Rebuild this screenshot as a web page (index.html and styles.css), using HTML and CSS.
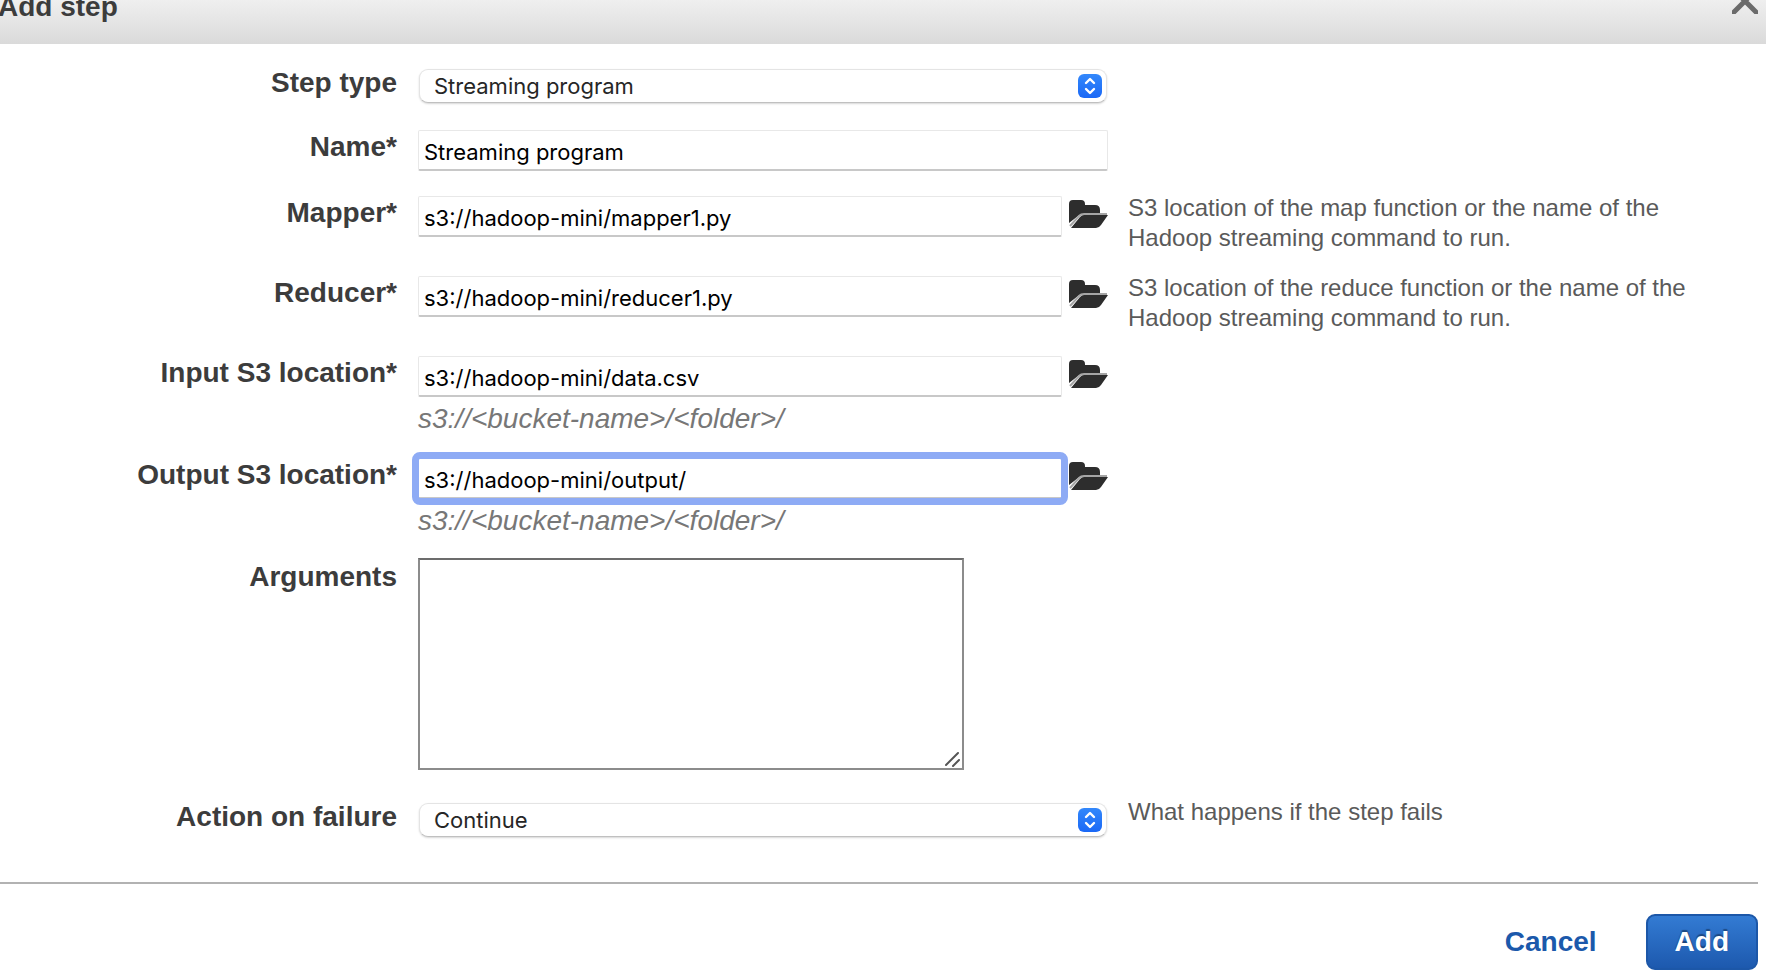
FILE: index.html
```
<!DOCTYPE html>
<html lang="en">
<head>
<meta charset="utf-8">
<title>Add step</title>
<link rel="stylesheet" href="styles.css">
</head>
<body>
<svg class="sprites" aria-hidden="true">
  <symbol id="folder" viewBox="0 0 39 29">
    <path fill="#2d2d2d" d="M0 24V5Q0 1 4 1h8q4 0 4 4v1h10q5 0 5 5v4H14q-3 0-5 2z"/>
    <path fill="none" stroke="#a5a5a5" stroke-width="2" d="M1 27l9-10q2-2 5-2h23"/>
    <path fill="#2d2d2d" d="M2 29l9-11q2-2 4-2h24l-7 10q-2 3-5 3z"/>
  </symbol>
  <symbol id="updown" viewBox="0 0 24 24">
    <path fill="none" stroke="#fff" stroke-width="2.4" stroke-linecap="round" stroke-linejoin="round" d="M8 9l4-4 4 4M8 15l4 4 4-4"/>
  </symbol>
</svg>
<div class="dialog">
  <header class="dialog-header">
    <h1 class="dialog-title">Add step</h1>
    <button class="close" type="button" aria-label="Close">
      <svg viewBox="0 0 26 26" width="26" height="26"><path fill="none" stroke="#6b6b6b" stroke-width="5" d="M-1-1L27 27M27-1L-1 27"/></svg>
    </button>
  </header>
  <form class="form">
    <div class="row row-select">
      <label class="label" for="type">Step type</label>
      <div class="control">
        <div class="select-wrap">
          <select class="select" id="type"><option>Streaming program</option></select>
          <svg class="badge"><use href="#updown"/></svg>
        </div>
      </div>
    </div>
    <div class="row row-name">
      <label class="label" for="name">Name*</label>
      <div class="control"><input class="input" id="name" type="text" value="Streaming program"></div>
    </div>
    <div class="row">
      <label class="label" for="mapper">Mapper*</label>
      <div class="control">
        <div class="path">
          <input class="input" id="mapper" type="text" value="s3://hadoop-mini/mapper1.py">
          <button class="browse" type="button" aria-label="Browse for mapper"><svg class="folder"><use href="#folder"/></svg></button>
        </div>
      </div>
      <p class="help">S3 location of the map function or the name of the Hadoop streaming command to run.</p>
    </div>
    <div class="row">
      <label class="label" for="reducer">Reducer*</label>
      <div class="control">
        <div class="path">
          <input class="input" id="reducer" type="text" value="s3://hadoop-mini/reducer1.py">
          <button class="browse" type="button" aria-label="Browse for reducer"><svg class="folder"><use href="#folder"/></svg></button>
        </div>
      </div>
      <p class="help">S3 location of the reduce function or the name of the Hadoop streaming command to run.</p>
    </div>
    <div class="row">
      <label class="label" for="input">Input S3 location*</label>
      <div class="control">
        <div class="path">
          <input class="input" id="input" type="text" value="s3://hadoop-mini/data.csv">
          <button class="browse" type="button" aria-label="Browse for input"><svg class="folder"><use href="#folder"/></svg></button>
        </div>
        <p class="hint">s3://&lt;bucket-name&gt;/&lt;folder&gt;/</p>
      </div>
    </div>
    <div class="row">
      <label class="label" for="output">Output S3 location*</label>
      <div class="control">
        <div class="path">
          <input class="input input-active" id="output" type="text" value="s3://hadoop-mini/output/">
          <button class="browse" type="button" aria-label="Browse for output"><svg class="folder"><use href="#folder"/></svg></button>
        </div>
        <p class="hint">s3://&lt;bucket-name&gt;/&lt;folder&gt;/</p>
      </div>
    </div>
    <div class="row row-area">
      <label class="label" for="args">Arguments</label>
      <div class="control">
        <div class="area-wrap">
          <textarea class="area" id="args"></textarea>
          <svg class="grip" viewBox="0 0 16 16"><path fill="none" stroke="#555" stroke-width="2" stroke-linecap="round" d="M1 14L13 2M8 15l6-6"/></svg>
        </div>
      </div>
    </div>
    <div class="row row-select">
      <label class="label" for="failure">Action on failure</label>
      <div class="control">
        <div class="select-wrap">
          <select class="select" id="failure"><option>Continue</option></select>
          <svg class="badge"><use href="#updown"/></svg>
        </div>
      </div>
      <p class="help">What happens if the step fails</p>
    </div>
  </form>
  <footer class="actions">
    <a class="cancel" href="#">Cancel</a>
    <button class="add" type="button">Add</button>
  </footer>
</div>
</body>
</html>
```
FILE: styles.css
```
* { box-sizing: border-box; }

body {
  margin: 0;
  background: #fff;
  color: #3c3c3c;
  font-family: "Liberation Sans", Arial, sans-serif;
  overflow: hidden;
}

.sprites { display: none; }

.dialog-header {
  display: flex;
  justify-content: space-between;
  align-items: flex-start;
  height: 44px;
  padding-right: 8px;
  overflow: hidden;
  background: linear-gradient(#efefef, #dadada);
}

.dialog-title {
  margin: -9px 0 0 -2px;
  font-size: 28px;
  line-height: 32px;
}

.close {
  display: flex;
  margin: -12px 0 0;
  padding: 0;
  border: 0;
  background: none;
}

.form {
  display: grid;
  gap: 20px;
  padding: 19px 40px 0 0;
}

.row {
  display: grid;
  grid-template-columns: 398fr 690fr 598fr;
  column-gap: 20px;
  align-items: start;
}

.row-select { min-height: 44px; }
.row-name { min-height: 46px; }

.label {
  padding: 4px 1px 0 0;
  font-size: 28px;
  font-weight: bold;
  line-height: 32px;
  text-align: right;
}

.control { padding-top: 3px; }
.row-select .control { padding-top: 6px; }
.row-area .control { padding-top: 1px; }

.select-wrap { position: relative; }

.select {
  display: block;
  appearance: none;
  width: calc(100% - 2px);
  height: 34px;
  margin: 0 1px;
  padding: 0 40px 0 14px;
  border: 1px solid #e4e4e4;
  border-bottom-color: #c0c0c0;
  border-radius: 9px;
  background: #fff;
  box-shadow: 0 1px 2px rgba(0, 0, 0, 0.16);
  color: #262626;
  font: 22px Inter, sans-serif;
}

.badge {
  position: absolute;
  top: 5px;
  right: 6px;
  width: 24px;
  height: 24px;
  border-radius: 6px;
  background: linear-gradient(#3388fb, #1a68f6);
  pointer-events: none;
}

.input {
  display: block;
  width: 100%;
  min-width: 0;
  height: 41px;
  padding: 4px 5px 0;
  border: 1px solid #e8e8e8;
  border-bottom: 2px solid #c8c8c8;
  border-radius: 2px;
  background: #fff;
  color: #000;
  font: 22px Inter, sans-serif;
}

.input-active {
  outline: 7px solid #8eabf5;
  outline-offset: -1px;
}

.path {
  display: flex;
  gap: 7px;
  align-items: flex-start;
}

.browse {
  padding: 3px 0 0;
  border: 0;
  background: none;
}

.folder {
  display: block;
  width: 39px;
  height: 29px;
}

.help {
  margin: 0;
  color: #5a5a5a;
  font-size: 24px;
  line-height: 30px;
}

.hint {
  margin: 5px 0 0;
  color: #777;
  font-size: 28px;
  font-style: italic;
  line-height: 33px;
}

.area-wrap {
  position: relative;
  width: 79.2%;
  margin-bottom: 7px;
}

.area {
  display: block;
  width: 100%;
  height: 212px;
  padding: 6px;
  border: 2px solid #8c8c8c;
  border-top-color: #6c6c6c;
  background: #fff;
  font: 22px Inter, sans-serif;
  resize: none;
}

.grip {
  position: absolute;
  right: 3px;
  bottom: 3px;
  width: 16px;
  height: 16px;
}

.actions {
  display: flex;
  justify-content: flex-end;
  align-items: center;
  gap: 49px;
  margin: 41px 8px 0 0;
  padding: 30px 0 8px;
  border-top: 2px solid #b2b2b2;
}

.cancel {
  color: #1b59ab;
  font-size: 28px;
  font-weight: bold;
  line-height: 32px;
  text-decoration: none;
}

.add {
  height: 56px;
  padding: 0 27px;
  border: 2px solid #1c57a8;
  border-radius: 9px;
  background: linear-gradient(#337bd3, #1d59ae);
  color: #fff;
  font: bold 28px "Liberation Sans", Arial, sans-serif;
  text-shadow: 0 -2px 1px rgba(0, 0, 0, 0.35);
}
```
